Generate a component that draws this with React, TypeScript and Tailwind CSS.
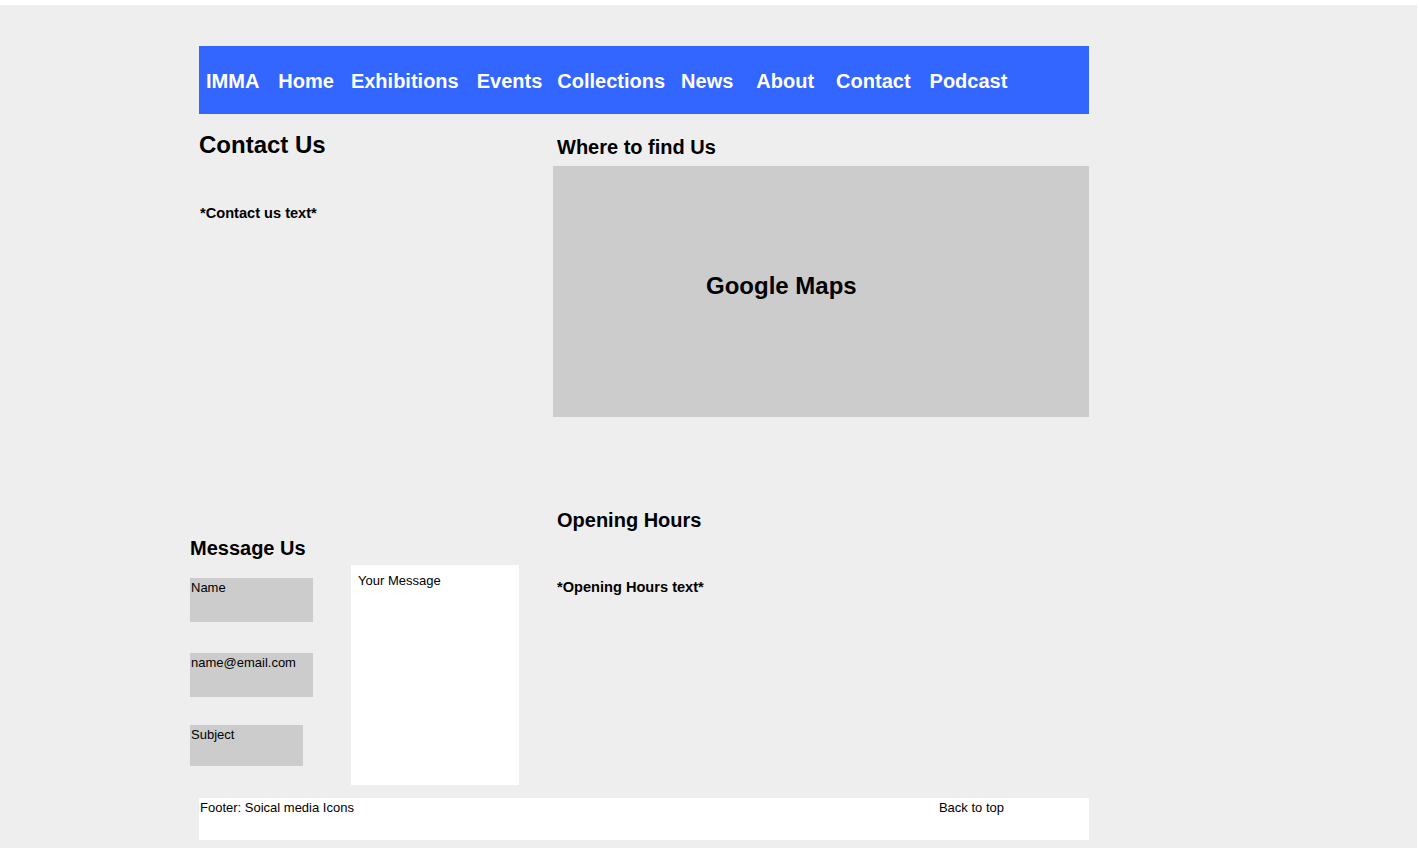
import React from 'react';

const navItems = [
  { label: 'IMMA', cls: 'ml-[7px]' },
  { label: 'Home', cls: 'ml-[19px]' },
  { label: 'Exhibitions', cls: 'ml-[17px]' },
  { label: 'Events', cls: 'ml-[18px]' },
  { label: 'Collections', cls: 'ml-[15px]' },
  { label: 'News', cls: 'ml-[16px]' },
  { label: 'About', cls: 'ml-[23px]' },
  { label: 'Contact', cls: 'ml-[22px]' },
  { label: 'Podcast', cls: 'ml-[19px]' },
];

const App: React.FC = () => {
  return (
    <div className="bg-white pt-[5px] pr-[2px] text-black" style={{ fontFamily: '"Liberation Sans", Arial, sans-serif' }}>
      <div className="bg-[#eeeeee] min-h-[843px] pt-[41px]">
        <div className="ml-[190px] w-[899px]">
          {/* nav */}
          <nav className="ml-[9px] w-[890px] h-[68px] bg-[#3366ff] flex items-center pt-[2px]">
            {navItems.map(item => (
              <a key={item.label} href="#" className={`${item.cls} text-white font-bold text-[20px] leading-[20px] whitespace-nowrap`}>
                {item.label}
              </a>
            ))}
          </nav>

          <div className="flex">
            {/* left column */}
            <div className="w-[363px] flex flex-col">
              <h1 className="ml-[9px] mt-[19px] text-[24px] leading-[24px] font-bold">Contact Us</h1>
              <p className="ml-[10px] mt-[49px] text-[14.6px] leading-[14px] font-bold">*Contact us text*</p>

              <h2 className="mt-[318px] text-[20px] leading-[20px] font-bold">Message Us</h2>
              <div className="flex mt-[7px]">
                <div className="flex flex-col pt-[13px] w-[123px]">
                  <div className="w-[123px] h-[44px] bg-[#cccccc] pl-[1px] pt-[3px] text-[13px] leading-[13px]">Name</div>
                  <div className="mt-[31px] w-[123px] h-[44px] bg-[#cccccc] pl-[1px] pt-[3px] text-[13px] leading-[13px]">name@email.com</div>
                  <div className="mt-[28px] w-[113px] h-[41px] bg-[#cccccc] pl-[1px] pt-[3px] text-[13px] leading-[13px]">Subject</div>
                </div>
                <div className="ml-[38px] w-[168px] h-[220px] bg-white pl-[7px] pt-[9px] text-[13px] leading-[13px]">Your Message</div>
              </div>
            </div>

            {/* right column */}
            <div className="w-[536px] flex flex-col">
              <h2 className="ml-[4px] mt-[23px] text-[20px] leading-[20px] font-bold">Where to find Us</h2>
              <div className="mt-[9px] h-[251px] bg-[#cccccc] pl-[153px] pt-[108px]">
                <span className="text-[24px] leading-[24px] font-bold">Google Maps</span>
              </div>
              <h2 className="ml-[4px] mt-[93px] text-[20px] leading-[20px] font-bold">Opening Hours</h2>
              <p className="ml-[4px] mt-[50px] text-[14.6px] leading-[14px] font-bold">*Opening Hours text*</p>
            </div>
          </div>

          {/* footer */}
          <footer className="ml-[9px] mt-[13px] w-[890px] h-[42px] bg-white flex justify-between pl-[1px] pr-[85px] pt-[3px] text-[13px] leading-[13px]">
            <span>Footer: Soical media Icons</span>
            <a href="#">Back to top</a>
          </footer>
        </div>
      </div>
    </div>
  );
};

export default App;
